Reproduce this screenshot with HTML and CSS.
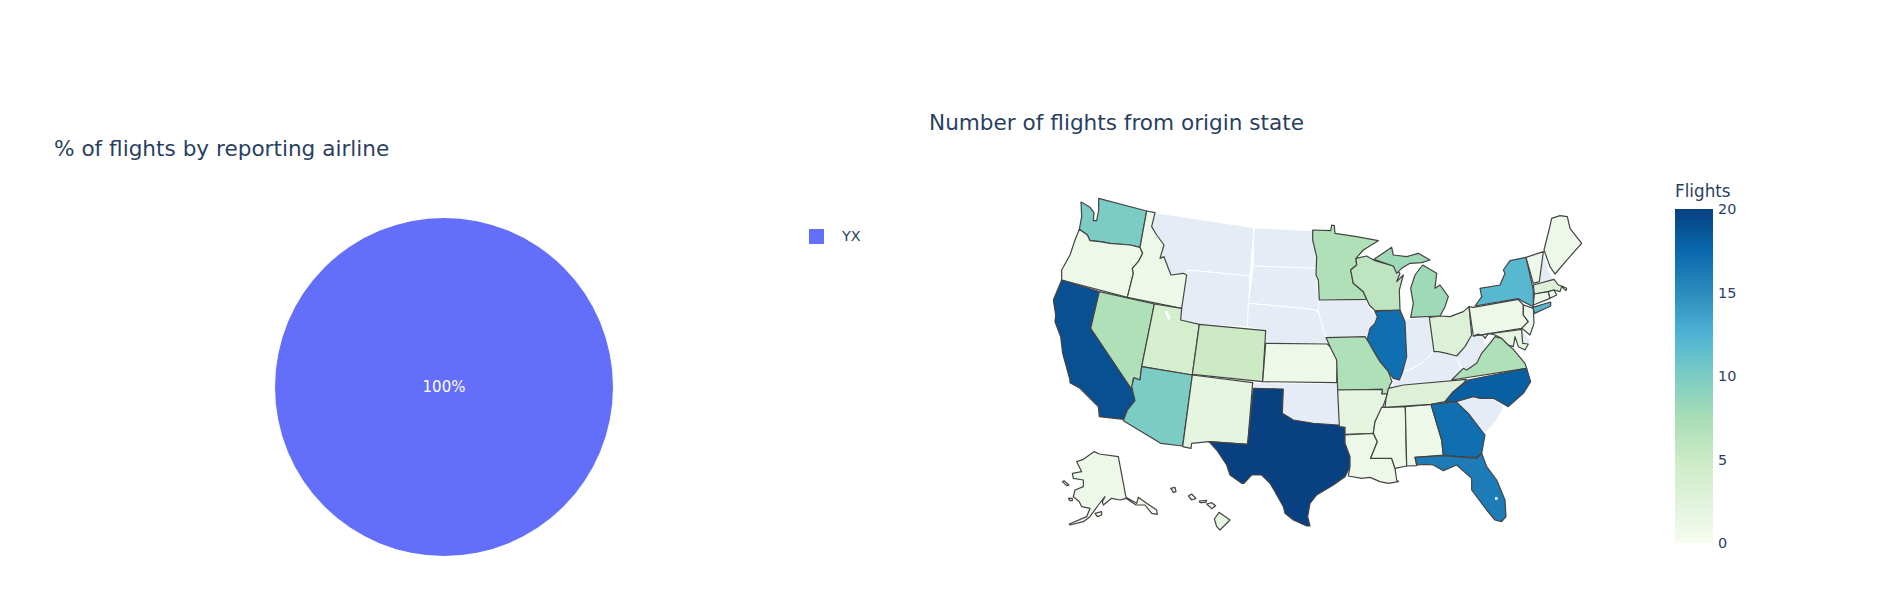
FILE: index.html
```html
<!DOCTYPE html>
<html lang="en">
<head>
<meta charset="utf-8">
<title>Flights dashboard</title>
<link rel="stylesheet" href="styles.css">
</head>
<body>
<main class="page">
  <section class="pie-panel">
    <h2 class="chart-title">% of flights by reporting airline</h2>
    <div class="pie-row">
      <div class="pie"><span class="pie-label">100%</span></div>
      <div class="legend"><span class="legend-swatch"></span><span class="legend-text">YX</span></div>
    </div>
  </section>
  <section class="map-panel">
    <h2 class="chart-title map-title">Number of flights from origin state</h2>
    <div class="map-row">
      <svg class="map" viewBox="0 0 1680 1140" aria-label="US states choropleth">
        <g class="nodata">
          <polygon points="345,68 642,113 630,258 442,240 440,255 430,250 393,255 385,235 372,200 360,205 372,165 350,135 335,110"/>
          <polygon points="442,240 630,258 622,412 478,403 422,390 425,355"/>
          <polygon points="642,113 818,122 835,235 640,228"/>
          <polygon points="640,228 835,235 828,250 838,330 838,362 825,360 790,355 625,340"/>
          <polygon points="625,340 790,355 825,360 838,372 858,440 862,462 677,460 677,422 622,412"/>
          <polygon points="638,578 890,580 898,600 895,705 820,700 760,690 727,670 730,597 640,595"/>
          <polygon points="1248,635 1300,620 1320,625 1360,625 1392,652 1370,690 1335,730 1285,670"/>
          <g transform="translate(780 0)">
            <polygon points="58,330 200,328 208,355 232,380 225,400 210,415 205,440 78,443 60,385 55,360"/>
            <polygon points="315,388 390,380 402,485 370,515 340,535 310,545 320,500"/>
            <polygon points="402,485 440,490 470,498 480,530 490,535 455,570 310,585 278,590 280,570 298,570 308,545 340,535 370,515"/>
            <polygon points="515,435 535,432 550,438 555,462 585,440 570,460 545,490 530,520 500,540 480,530 470,498 495,470"/>
            <polygon points="730,185 747,245 762,270 718,280"/>
            <polygon points="665,418 690,450 685,462 668,460"/>
          </g>
        </g>
        <g class="states">
          <polygon class="v10" points="123,36 130,40 150,52 162,68 160,92 170,92 176,60 176,25 320,63 300,172 270,165 210,160 180,155 150,152 142,135 118,118 125,80"/>
          <polygon class="v1" points="118,118 142,135 150,152 180,155 210,160 270,165 300,172 308,190 295,215 277,235 280,250 262,322 65,270 65,240 90,195 105,150"/>
          <polygon class="v19" points="65,270 178,305 152,415 275,590 285,632 262,660 250,688 178,680 175,650 150,625 120,595 90,578 90,570 68,490 62,440 45,395 47,375 40,330"/>
          <polygon class="v7" points="178,305 343,342 305,530 300,570 280,565 275,598 152,415"/>
          <polygon class="v1" points="320,63 345,68 335,110 350,135 372,165 360,205 372,200 385,235 393,255 430,250 440,255 425,355 262,322 280,250 277,235 295,215 308,190 300,172"/>
          <polygon class="v4" points="343,342 425,355 422,390 478,403 457,555 305,530"/>
          <polygon class="v5" points="478,403 677,422 668,575 457,553"/>
          <polygon class="v1" points="677,460 862,462 880,480 892,500 890,578 668,575"/>
          <polygon class="v10" points="305,530 457,555 428,768 362,760 250,692 262,660 285,632 275,590 282,563 300,570"/>
          <polygon class="v2" points="457,555 638,578 623,763 507,755 455,760 453,775 428,770"/>
          <polygon class="v20" points="640,595 730,597 727,670 760,690 820,700 895,705 915,712 915,760 930,800 930,830 915,860 880,885 830,915 810,940 803,980 810,1008 800,1008 760,990 735,970 730,950 705,905 690,880 665,855 635,855 612,880 605,880 570,855 560,825 530,780 507,755 623,763"/>
          <g transform="translate(780 0)">
            <polygon class="v7" points="38,120 92,122 95,105 103,107 105,130 170,140 235,152 190,180 168,205 170,225 152,240 160,280 190,305 200,328 58,330 55,270 48,255 50,200 38,150"/>
            <polygon class="v6" points="168,205 200,198 225,212 280,228 300,250 290,275 310,255 298,300 300,360 225,362 208,345 200,328 190,305 160,280 152,240 170,225"/>
            <polygon class="v8" points="222,208 275,172 280,195 320,200 355,190 390,210 365,218 330,220 305,235 290,250 280,228"/>
            <polygon class="v8" points="332,382 340,340 332,295 345,255 368,225 410,250 405,295 420,285 445,320 435,350 420,378"/>
            <polygon class="v17" points="225,365 300,360 315,395 320,500 308,545 298,570 280,565 265,545 240,515 225,490 200,455 210,415 225,400 232,380"/>
            <polygon class="v3" points="388,382 420,378 450,380 490,365 507,350 515,435 495,470 470,498 440,490 415,485 402,485"/>
            <polygon class="v7" points="78,443 195,440 205,455 225,490 240,515 265,545 276,575 270,585 262,612 245,612 247,598 113,600 110,510 95,480"/>
            <polygon class="v7" points="455,570 490,535 500,540 530,520 545,490 570,460 585,440 605,445 625,465 640,478 675,520 680,535"/>
            <polygon class="v1" points="507,350 520,352 655,328 670,345 670,375 685,395 665,415 520,438"/>
            <polygon class="v12" points="525,348 545,320 540,295 600,285 615,250 610,240 630,212 678,202 700,300 700,350 670,335 655,326"/>
            <polygon class="v12" points="698,352 752,336 752,348 704,370"/>
            <polygon class="v1" points="670,345 700,355 702,400 690,435 672,420 665,415 685,395 670,375"/>
            <polygon class="v2" points="520,438 665,418 668,460 685,462 675,480 655,470 645,440 640,470 625,465 605,445 585,435 565,430 555,445 550,438 535,432"/>
            <polygon class="v1" points="678,202 730,185 718,275 700,280"/>
            <polygon class="v1" points="747,120 755,85 780,77 802,80 810,115 845,160 805,205 765,252 750,230 732,180"/>
            <polygon class="v3" points="700,285 762,268 775,285 790,290 800,295 798,302 785,290 780,305 762,300 745,305 703,312"/>
            <polygon class="v1" points="703,312 745,305 750,325 700,345"/>
            <polygon class="v1" points="745,305 762,300 770,315 750,325"/>
          </g>
          <g transform="translate(780 540)">
            <polygon class="v2" points="113,60 247,58 245,72 262,72 258,85 245,120 225,155 220,190 135,193 135,172 118,170"/>
            <polygon class="v1" points="135,195 220,190 232,215 212,265 275,265 285,295 290,330 295,335 265,340 240,335 210,322 185,325 145,318 150,290 150,260 135,220"/>
            <polygon class="v1" points="245,112 316,110 320,288 285,295 275,265 212,265 232,215 220,190 225,155"/>
            <polygon class="v1" points="316,110 393,103 425,210 430,255 345,262 350,287 320,288"/>
            <polygon class="v3" points="265,55 310,45 500,28 490,40 460,65 435,95 393,103 255,112 258,85 262,72"/>
            <polygon class="v17" points="393,103 468,95 505,130 555,195 545,250 530,262 430,257 425,210"/>
            <polygon class="v16" points="345,262 430,257 530,265 545,250 560,290 590,330 615,390 618,440 605,455 585,450 560,420 515,360 515,325 470,285 430,302 400,285 380,283 352,285"/>
            <polygon class="v18" points="435,95 460,65 505,30 680,-5 692,35 670,70 625,110 580,85 540,85 520,80 468,95"/>
          </g>
          <g transform="translate(0 540)">
            <polygon class="v1" points="162,245 178,252 235,260 258,382 290,400 295,382 320,400 350,420 352,433 335,430 315,405 288,405 258,385 240,390 215,385 190,405 187,395 195,380 175,405 150,440 130,455 90,465 88,462 140,440 150,415 125,410 118,395 100,380 105,360 130,350 130,330 100,325 97,310 125,305 110,275 130,268"/>
            <polygon class="v1" points="67,335 72,332 87,345 80,347"/>
            <polygon class="v1" points="165,430 185,425 185,435 172,440"/>
            <polygon class="v1" points="85,385 97,385 97,392 90,392"/>
            <polygon class="v2" points="392,355 405,352 408,365 400,367"/>
            <polygon class="v2" points="445,378 455,372 468,385 455,390"/>
            <polygon class="v2" points="478,393 500,391 498,397 480,398"/>
            <polygon class="v2" points="500,402 515,398 527,407 515,416"/>
            <polygon class="v2" points="537,427 570,450 540,480 530,470 523,447"/>
          </g>
        </g>
        <polygon class="lake" points="374,364 382,362 392,385 384,390"/>
        <polygon class="lake-fl" points="1365,921 1373,921 1373,930 1365,930"/>
      </svg>
      <div class="colorbar">
        <div class="cb-title">Flights</div>
        <div class="cb-body">
          <div class="cb-bar"></div>
          <div class="cb-ticks">
            <span class="cb-tick">20</span>
            <span class="cb-tick">15</span>
            <span class="cb-tick">10</span>
            <span class="cb-tick">5</span>
            <span class="cb-tick">0</span>
          </div>
        </div>
      </div>
    </div>
  </section>
</main>
</body>
</html>
```
FILE: styles.css
```css
html, body {
  margin: 0;
  padding: 0;
  background: #fff;
}

body {
  width: 1880px;
  height: 603px;
  overflow: hidden;
  font-family: "DejaVu Sans", Verdana, sans-serif;
  color: #2a3f5f;
}

.page {
  display: grid;
  grid-template-columns: 929px 951px;
  height: 603px;
}

.chart-title {
  margin: 0;
  font-size: 21.6px;
  font-weight: 400;
  line-height: 24px;
  white-space: nowrap;
}

.pie-panel {
  padding: 137px 0 0 54px;
}

.pie-row {
  display: flex;
  align-items: flex-start;
  margin-top: 57px;
}

.pie {
  display: flex;
  align-items: center;
  justify-content: center;
  flex: none;
  width: 338px;
  height: 338px;
  margin-left: 221px;
  border-radius: 50%;
  background: #636efa;
}

.pie-label {
  font-size: 15px;
  color: #fff;
}

.legend {
  display: flex;
  align-items: center;
  gap: 18px;
  margin: 10px 0 0 196px;
  font-size: 14.4px;
}

.legend-swatch {
  width: 15px;
  height: 15px;
  background: #636efa;
}

.map-panel {
  padding-top: 111px;
}

.map-title {
  margin-bottom: 46px;
}

.map-row {
  display: flex;
  align-items: flex-start;
  margin-left: 111px;
}

.map {
  flex: none;
  width: 560px;
  height: 380px;
  margin-top: 9px;
}

.nodata polygon {
  fill: #e5ecf6;
  stroke: #fff;
  stroke-width: 3;
  stroke-linejoin: round;
}

.states polygon {
  stroke: #444;
  stroke-width: 3.6;
  stroke-linejoin: round;
}

.v1 { fill: #eef8e8; }
.v2 { fill: #e5f5df; }
.v3 { fill: #dcf1d7; }
.v4 { fill: #d4eece; }
.v5 { fill: #ccebc5; }
.v6 { fill: #bee5bf; }
.v7 { fill: #afe0b8; }
.v8 { fill: #9fdab8; }
.v10 { fill: #7bccc4; }
.v12 { fill: #57b8d0; }
.v16 { fill: #1d7cb7; }
.v17 { fill: #0f6fb0; }
.v18 { fill: #0860a3; }
.v19 { fill: #085092; }
.v20 { fill: #084081; }

.lake { fill: #fff; }
.lake-fl { fill: #cfeefa; }

.colorbar {
  flex: none;
  margin-left: 75px;
}

.cb-title {
  font-size: 16.8px;
  line-height: 20px;
}

.cb-body {
  display: flex;
  margin-top: 8px;
}

.cb-bar {
  width: 38px;
  height: 334px;
  background: linear-gradient(to top, #f7fcf0 0%, #e0f3db 12.5%, #ccebc5 25%, #a8ddb5 37.5%, #7bccc4 50%, #4eb3d3 62.5%, #2b8cbe 75%, #0868ac 87.5%, #084081 100%);
}

.cb-ticks {
  display: flex;
  flex-direction: column;
  justify-content: space-between;
  height: 334px;
  margin-left: 5px;
}

.cb-tick {
  height: 0;
  font-size: 14.4px;
  line-height: 0;
  color: #2a3f5f;
}
```
